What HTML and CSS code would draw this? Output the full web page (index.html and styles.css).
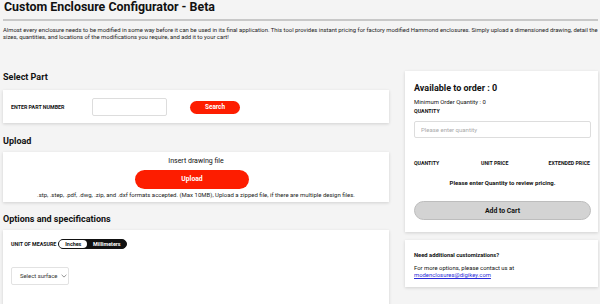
FILE: index.html
```html
<!DOCTYPE html>
<html lang="en">
<head>
    <meta charset="UTF-8">
    <meta name="viewport" content="width=device-width, initial-scale=1.0">
    <title>Custom Enclosure Configurator - Beta</title>
    <link rel="stylesheet" href="styles.css">
</head>
<body>
    <div class="page-head">
        <h1>Custom Enclosure Configurator - Beta</h1>
    </div>
    <p class="intro">Almost every enclosure needs to be modified in some way before it can be used in its final application. This tool provides instant pricing for factory modified Hammond enclosures. Simply upload a dimensioned drawing, detail the sizes, quantities, and locations of the modifications you require, and add it to your cart!</p>

    <div class="layout">
        <div class="main">
            <h2 class="first">Select Part</h2>
            <div class="card part-row">
                <label for="part-number">ENTER PART NUMBER</label>
                <input type="text" id="part-number" class="part-input">
                <button class="btn-red btn-search">Search</button>
            </div>

            <h2>Upload</h2>
            <div class="card upload">
                <p class="upload-title">Insert drawing file</p>
                <button class="btn-red btn-upload">Upload</button>
                <p class="upload-note">.stp, .step, .pdf, .dwg, .zip, and .dxf formats accepted. (Max 10MB), Upload a zipped file, if there are multiple design files.</p>
            </div>

            <h2>Options and specifications</h2>
            <div class="card options">
                <div class="unit-row">
                    <span class="unit-label">UNIT OF MEASURE</span>
                    <div class="toggle">
                        <span class="toggle-opt active">Inches</span>
                        <span class="toggle-opt">Millimeters</span>
                    </div>
                </div>
                <div class="surface-select">
                    <span>Select surface</span>
                    <svg width="6" height="4" viewBox="0 0 6 4"><path d="M0.6 0.8 L3 3.1 L5.4 0.8" fill="none" stroke="#666" stroke-width="0.7"/></svg>
                </div>
            </div>
        </div>

        <div class="side">
            <div class="card order">
                <h3>Available to order : 0</h3>
                <p class="min-qty">Minimum Order Quantity : 0</p>
                <label class="qty-label" for="qty">QUANTITY</label>
                <input type="text" id="qty" class="qty-input" placeholder="Please enter quantity">
                <div class="price-head">
                    <span>QUANTITY</span>
                    <span>UNIT PRICE</span>
                    <span>EXTENDED PRICE</span>
                </div>
                <p class="price-msg">Please enter Quantity to review pricing.</p>
                <button class="btn-cart">Add to Cart</button>
            </div>

            <div class="card help">
                <p class="help-title">Need additional customizations?</p>
                <p class="help-text">For more options, please contact us at<br><a href="#">modenclosures@digikey.com</a></p>
            </div>
        </div>
    </div>
</body>
</html>
```

FILE: styles.css
```css
body {
    font-family: Roboto, "Liberation Sans", Arial, sans-serif;
    margin: 0;
    padding: 0 2px 0 3px;
    background-color: #f4f4f4;
    color: #111;
    overflow: hidden;
}
p {
    margin: 0;
}
.page-head {
    border-bottom: 2px solid #c8c8c8;
    padding: 0 0 5px 1px;
}
h1 {
    margin: 0;
    font-size: 12.4px;
    line-height: 14px;
    font-weight: 700;
}
.intro {
    font-size: 5.9px;
    line-height: 7px;
    margin-top: 6px;
    color: #222;
}
.layout {
    display: flex;
    gap: 16px;
    align-items: flex-start;
    margin-top: 30px;
}
.main {
    width: 386px;
}
.side {
    flex: 1;
}
h2 {
    margin: 11px 0 5px;
    font-size: 9px;
    line-height: 12px;
    font-weight: 700;
}
h2.first {
    margin-top: 0;
    margin-bottom: 7px;
}
.card {
    background: white;
    box-shadow: 0 1px 3px rgba(0,0,0,0.15);
}
.part-row + h2 {
    margin-top: 12px;
}

/* select part */
.part-row {
    display: flex;
    align-items: center;
    padding: 8px 8px 7px;
}
.part-row label {
    width: 81px;
    font-size: 5.3px;
    font-weight: 700;
}
.part-input {
    width: 75px;
    height: 18px;
    box-sizing: border-box;
    border: 1px solid #ddd;
    border-radius: 2px;
    padding: 0 4px;
}
.btn-red {
    background-color: #fd1d00;
    color: white;
    border: none;
    border-radius: 8px;
    font-family: inherit;
    font-weight: 700;
    cursor: pointer;
    padding: 0;
}
.btn-search {
    width: 50px;
    height: 13px;
    margin-left: 23px;
    font-size: 6.4px;
}

/* upload */
.upload {
    text-align: center;
    padding: 4px 0 3px;
}
.upload-title {
    font-size: 7px;
    line-height: 10px;
}
.btn-upload {
    width: 114px;
    height: 19px;
    border-radius: 10px;
    font-size: 6.8px;
    margin: 1px 8px 0 0;
}
.upload-note {
    font-size: 6px;
    line-height: 8px;
    margin-top: 2px;
    color: #222;
}

/* options */
.options {
    padding: 9px 8px 20px;
    height: 50px;
}
.unit-row {
    display: flex;
    align-items: center;
    gap: 2px;
}
.unit-label {
    font-size: 5.3px;
    font-weight: 700;
}
.toggle {
    display: flex;
    background: #111;
    border: 1px solid #111;
    border-radius: 6px;
    height: 10px;
    width: 69px;
    box-sizing: border-box;
}
.toggle-opt {
    flex: 1;
    text-align: center;
    font-size: 5.4px;
    font-weight: 700;
    color: white;
    line-height: 8px;
    border-radius: 5px;
}
.toggle-opt.active {
    flex: none;
    width: 28px;
    background: white;
    color: #111;
}
.surface-select {
    display: flex;
    align-items: center;
    gap: 4px;
    width: 58px;
    height: 18px;
    box-sizing: border-box;
    margin-top: 18px;
    border: 1px solid #e2e2e2;
    border-radius: 2px;
    padding-left: 8px;
    font-size: 5.9px;
    color: #333;
}

/* order summary */
.order {
    padding: 11px 7px 12px 9px;
}
h3 {
    margin: 0;
    font-size: 9px;
    line-height: 12px;
    font-weight: 700;
}
.min-qty {
    font-size: 5.9px;
    line-height: 8px;
    margin-top: 4px;
}
.qty-label {
    display: block;
    font-size: 5.3px;
    line-height: 6px;
    font-weight: 700;
    margin-top: 2px;
}
.qty-input {
    display: block;
    width: 100%;
    height: 17px;
    box-sizing: border-box;
    border: 1px solid #ddd;
    border-radius: 2px;
    margin-top: 7px;
    padding: 0 6px;
    font-family: inherit;
    font-size: 6px;
}
.qty-input::placeholder {
    color: #aaa;
}
.price-head {
    display: grid;
    grid-template-columns: 67px 1fr auto;
    margin-top: 22px;
    font-size: 5.2px;
    line-height: 6px;
    font-weight: 700;
    padding-right: 1px;
}
.price-msg {
    text-align: center;
    font-size: 6px;
    line-height: 8px;
    font-weight: 700;
    margin-top: 13px;
}
.btn-cart {
    display: block;
    width: 100%;
    height: 19px;
    margin-top: 14px;
    background-color: #d3d3d3;
    border: 1px solid #bdbdbd;
    border-radius: 10px;
    font-family: inherit;
    font-size: 6.9px;
    font-weight: 700;
    color: #111;
}

/* help card */
.help {
    margin-top: 8px;
    padding: 12px 9px 8px;
}
.help-title {
    font-size: 5.8px;
    line-height: 7px;
    font-weight: 700;
}
.help-text {
    font-size: 5.9px;
    line-height: 7px;
    margin-top: 6px;
}
.help-text a {
    color: #2a2ad8;
}
```
